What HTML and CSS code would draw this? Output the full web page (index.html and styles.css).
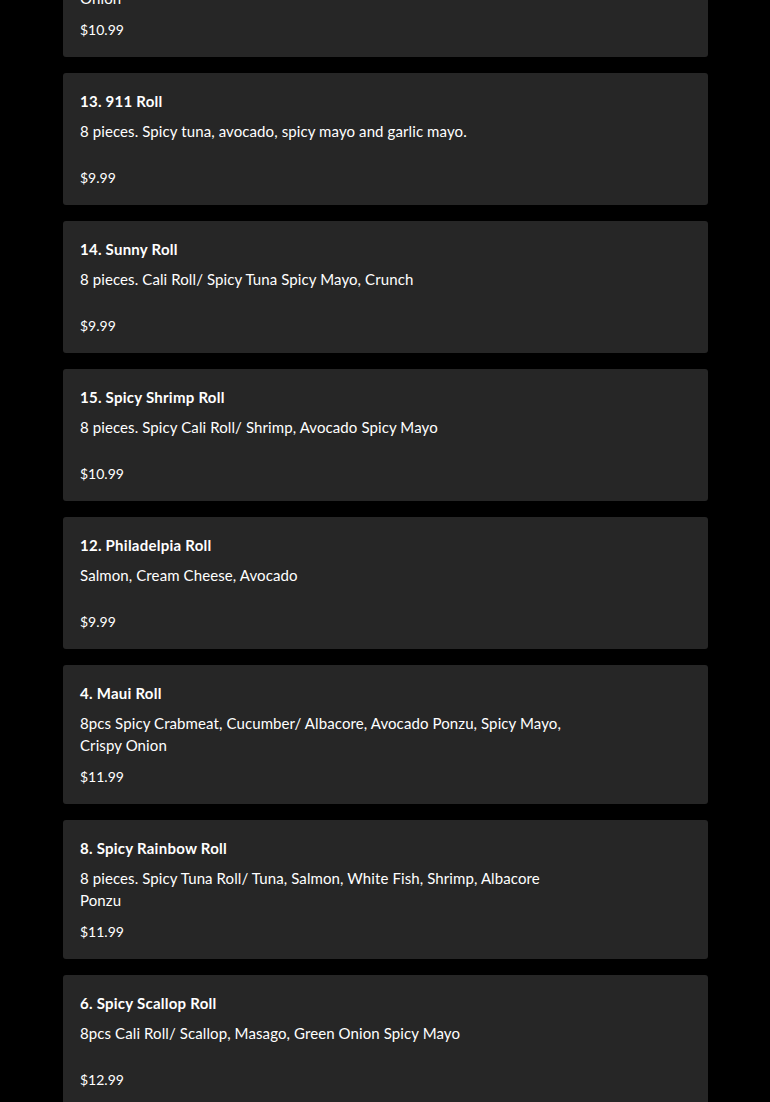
FILE: index.html
```html
<!DOCTYPE html>
<html>
<head>
<meta charset="utf-8">
<link rel="stylesheet" href="styles.css">
</head>
<body>
<main class="menu">
  <div class="card">
    <div class="title">9. Crunchy Roll</div>
    <div class="desc">8pcs Cali Roll/ Shrimp Tempura, Eel Sauce, Crunch, Green<br>Onion</div>
    <div class="price">$10.99</div>
  </div>
  <div class="card">
    <div class="title">13. 911 Roll</div>
    <div class="desc">8 pieces. Spicy tuna, avocado, spicy mayo and garlic mayo.</div>
    <div class="price">$9.99</div>
  </div>
  <div class="card">
    <div class="title">14. Sunny Roll</div>
    <div class="desc">8 pieces. Cali Roll/ Spicy Tuna Spicy Mayo, Crunch</div>
    <div class="price">$9.99</div>
  </div>
  <div class="card">
    <div class="title">15. Spicy Shrimp Roll</div>
    <div class="desc">8 pieces. Spicy Cali Roll/ Shrimp, Avocado Spicy Mayo</div>
    <div class="price">$10.99</div>
  </div>
  <div class="card">
    <div class="title">12. Philadelpia Roll</div>
    <div class="desc">Salmon, Cream Cheese, Avocado</div>
    <div class="price">$9.99</div>
  </div>
  <div class="card">
    <div class="title">4. Maui Roll</div>
    <div class="desc">8pcs Spicy Crabmeat, Cucumber/ Albacore, Avocado Ponzu, Spicy Mayo, Crispy Onion</div>
    <div class="price">$11.99</div>
  </div>
  <div class="card">
    <div class="title">8. Spicy Rainbow Roll</div>
    <div class="desc">8 pieces. Spicy Tuna Roll/ Tuna, Salmon, White Fish, Shrimp, Albacore Ponzu</div>
    <div class="price">$11.99</div>
  </div>
  <div class="card">
    <div class="title">6. Spicy Scallop Roll</div>
    <div class="desc">8pcs Cali Roll/ Scallop, Masago, Green Onion Spicy Mayo</div>
    <div class="price">$12.99</div>
  </div>
</main>
</body>
</html>
```

FILE: styles.css
```css
html, body {
  margin: 0;
  padding: 0;
  background: #000;
}
body {
  font-family: "Lato", "Liberation Sans", sans-serif;
  color: #fff;
  font-size: 14px;
}
.menu {
  display: flex;
  flex-direction: column;
  gap: 16px;
  width: 645px;
  margin: -82px auto 0 63px;
}
.card {
  background: #262626;
  border-radius: 3px;
  padding: 16px 17px 17px;
  display: flex;
  flex-direction: column;
}
.title {
  font-size: 15px;
  font-weight: 700;
  letter-spacing: 0.25px;
  line-height: 24px;
}
.desc {
  font-size: 15px;
  letter-spacing: 0.1px;
  margin-top: 7px;
  line-height: 22px;
  min-height: 37px;
  max-width: 490px;
}
.price {
  margin-top: 11px;
  line-height: 20px;
}
```
